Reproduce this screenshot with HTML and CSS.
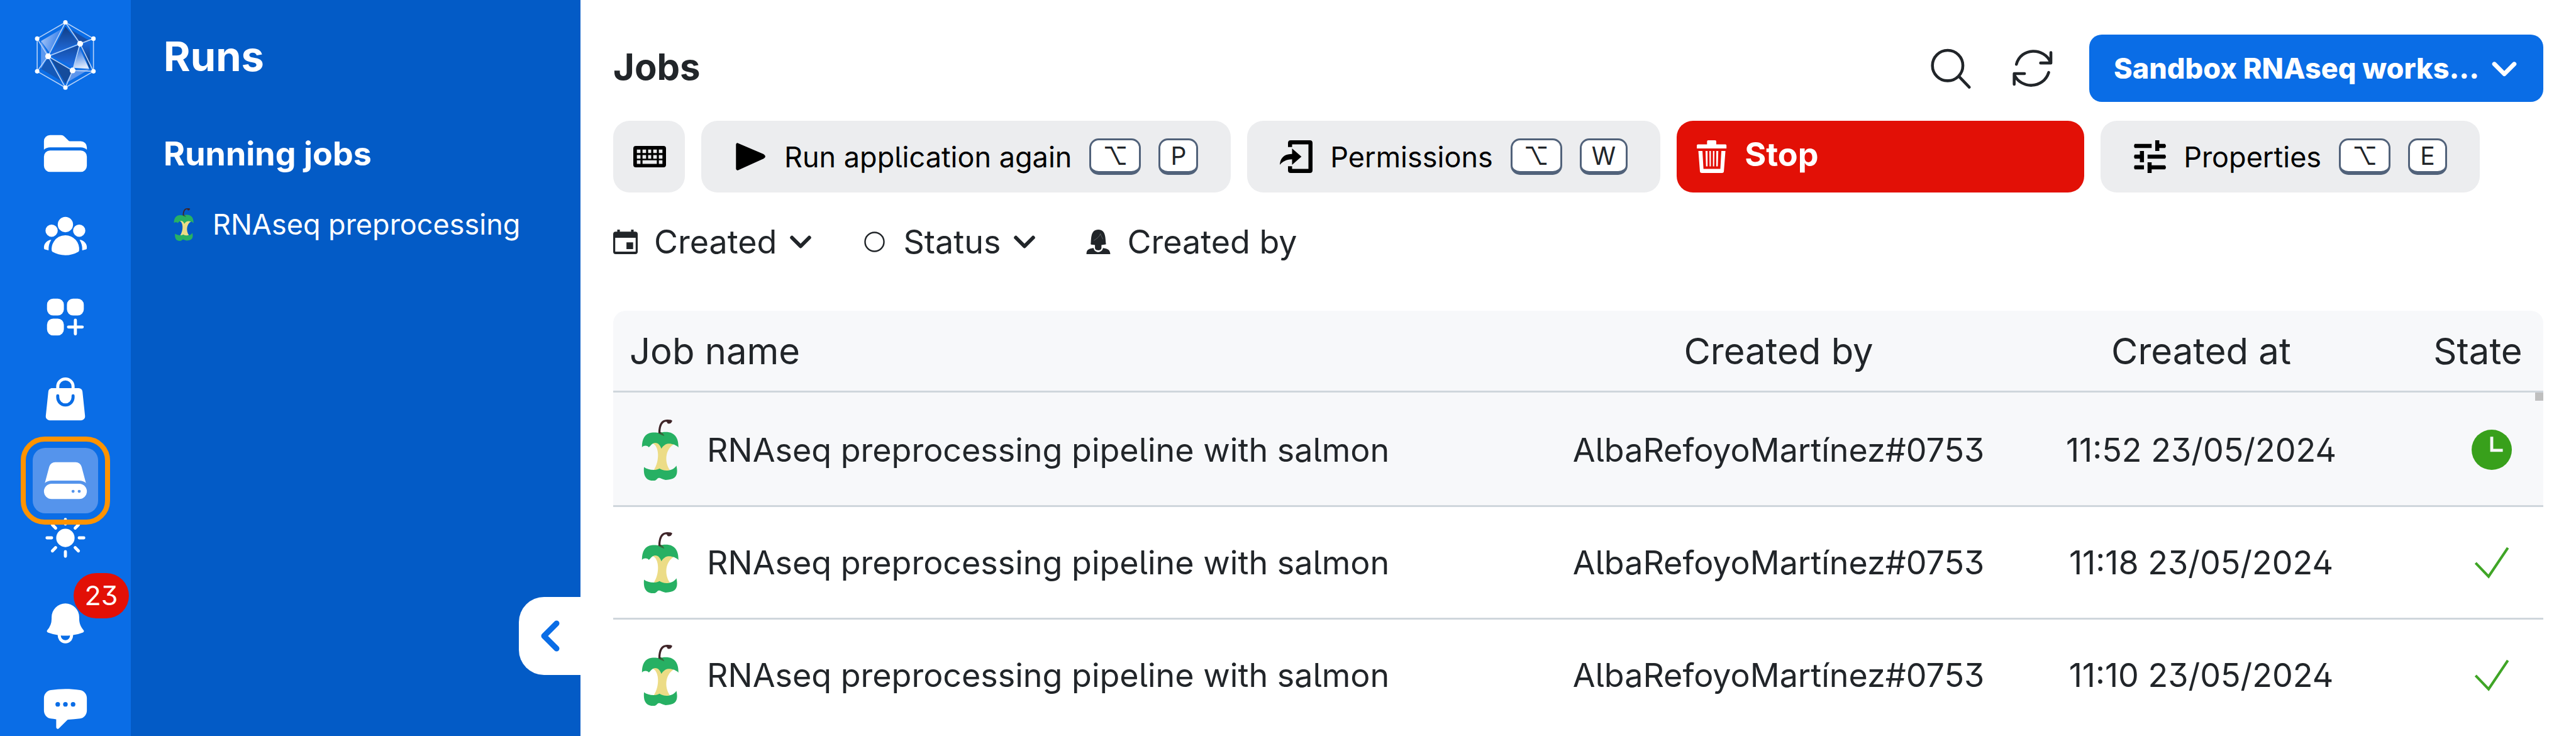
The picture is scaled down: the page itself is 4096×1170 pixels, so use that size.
FILE: index.html
```html
<!DOCTYPE html>
<html lang="en">
<head>
<meta charset="utf-8">
<title>Jobs</title>
<link rel="stylesheet" href="styles.css">
</head>
<body>
<svg class="sprite" aria-hidden="true">
  <symbol id="apple" viewBox="-24 60 358 358">
    <path d="M112 200C150 215 155 300 118 357C145 365 185 368 212 355C180 310 185 235 235 206C210 190 130 185 112 200Z" fill="#ecdc86"/>
    <path d="M49 222C48 175 68 140 105 137C125 134 140 138 152 139C170 131 205 130 225 140C255 155 263 185 263 223C245 203 205 195 187 206C174 214 168 222 163 231C155 212 146 197 127 197C106 199 102 214 89 222C78 210 62 210 49 222Z" fill="#27b063"/>
    <path d="M61 339C84 356 128 362 152 347C174 364 228 366 251 330C263 385 250 413 188 414C164 410 156 399 144 403C134 409 134 419 112 419C72 416 56 392 61 339Z" fill="#27b063"/>
    <path d="M158 133C170 137 177 146 180 157C168 151 155 149 147 141Z" fill="#356b3d"/>
    <path d="M145 140C146 90 160 60 195 60C215 60 228 63 226 69C222 82 206 90 196 78C200 74 190 72 185 73C165 79 156 110 158 141Z" fill="#3f2529"/>
  </symbol>
  <symbol id="chevron" viewBox="0 0 16 16"><path d="M2.500 5.500L8 11L13.500 5.500" fill="none" stroke="currentColor" stroke-width="2.400" stroke-linecap="round" stroke-linejoin="round"/></symbol>
  <symbol id="check" viewBox="-2 -2 70 64"><path d="M2 31L27 57L64 2" fill="none" stroke="#3fa526" stroke-width="5"/></symbol>
</svg>

<nav class="rail" aria-label="Main">
  <a class="logo" href="#" aria-label="Home">
    <svg viewBox="144 60 360 408">
      <defs>
        <linearGradient id="g1" x1="0" y1="0" x2="1" y2=".3"><stop offset=".1" stop-color="#a6c5f5"/><stop offset="1" stop-color="#2f7bea"/></linearGradient>
        <linearGradient id="g2" x1="0" y1="0" x2="0" y2="1"><stop offset="0" stop-color="#113d85"/><stop offset="1" stop-color="#2170e4"/></linearGradient>
        <linearGradient id="g3" x1="0" y1="0" x2="0" y2="1"><stop offset="0" stop-color="#1b6ae0"/><stop offset="1" stop-color="#0c356f"/></linearGradient>
        <linearGradient id="g4" x1="0" y1="0" x2=".2" y2="1"><stop offset=".1" stop-color="#2a72e0"/><stop offset="1" stop-color="#dce8fb"/></linearGradient>
        <linearGradient id="g5" x1="0" y1="0" x2="0" y2="1"><stop offset="0" stop-color="#154a9e"/><stop offset="1" stop-color="#1e70ea"/></linearGradient>
      </defs>
      <path d="M305 110L181 182L232 250Z" fill="url(#g1)"/>
      <path d="M181 182L225 262L181 345Z" fill="#5b99f0"/>
      <path d="M324 98L240 262L402 192Z" fill="url(#g2)"/>
      <path d="M345 110L467 182L405 195Z" fill="#184fa8"/>
      <path d="M467 182V347L410 205Z" fill="url(#g3)"/>
      <path d="M408 225L463 345L370 338Z" fill="url(#g4)"/>
      <path d="M245 268L404 205L366 335Z" fill="url(#g5)"/>
      <path d="M223 280L181 345L320 428Z" fill="#1559b8"/>
      <path d="M232 274L366 357L324 430Z" fill="#154c9c"/>
      <path d="M366 355L465 347L330 426Z" fill="#5c95ec"/>
      <g fill="none" stroke="#b6d1f7" stroke-width="6">
        <path d="M324 73L488 168V359L324 454L159 359V168Z"/>
        <path d="M324 73L410 198L488 168M410 198L488 359L366 354L410 198L223 271L366 354L324 454L223 271L324 73M159 168L223 271L159 359"/>
      </g>
      <g fill="#fff"><circle cx="324" cy="73" r="13"/><circle cx="488" cy="168" r="13"/><circle cx="488" cy="359" r="13"/><circle cx="324" cy="454" r="13"/><circle cx="159" cy="359" r="13"/><circle cx="159" cy="168" r="13"/><circle cx="410" cy="198" r="17"/><circle cx="223" cy="271" r="17"/><circle cx="366" cy="354" r="17"/></g>
    </svg>
  </a>
  <div class="rail-main">
    <a class="rail-link" href="#" aria-label="Files"><svg viewBox="0 0 24 24"><path d="M19.500 21a3 3 0 0 0 3-3v-4.500a3 3 0 0 0-3-3h-15a3 3 0 0 0-3 3V18a3 3 0 0 0 3 3h15ZM1.500 10.146V6a3 3 0 0 1 3-3h5.379a2.250 2.250 0 0 1 1.590.659l2.122 2.121c.14.141.331.22.53.22H19.500a3 3 0 0 1 3 3v1.146A4.483 4.483 0 0 0 19.500 9h-15a4.483 4.483 0 0 0-3 1.146Z"/></svg></a>
    <a class="rail-link" href="#" aria-label="Projects"><svg viewBox="0 0 24 24"><path d="M8.250 6.750a3.750 3.750 0 1 1 7.500 0 3.750 3.750 0 0 1-7.500 0ZM15.750 9.750a3 3 0 1 1 6 0 3 3 0 0 1-6 0ZM2.250 9.750a3 3 0 1 1 6 0 3 3 0 0 1-6 0ZM6.310 15.117A6.745 6.745 0 0 1 12 12a6.745 6.745 0 0 1 6.709 7.498.75.75 0 0 1-.372.568A12.696 12.696 0 0 1 12 21.750c-2.305 0-4.470-.612-6.337-1.684a.75.75 0 0 1-.372-.568 6.787 6.787 0 0 1 1.019-4.380ZM5.082 14.254a8.287 8.287 0 0 0-1.308 5.135 9.687 9.687 0 0 1-1.764-.44l-.115-.04a.563.563 0 0 1-.373-.487l-.01-.121a3.750 3.750 0 0 1 3.570-4.047ZM20.226 19.389a8.287 8.287 0 0 0-1.308-5.135 3.750 3.750 0 0 1 3.570 4.047l-.01.121a.563.563 0 0 1-.373.486l-.115.04c-.567.2-1.156.349-1.764.441Z"/></svg></a>
    <a class="rail-link" href="#" aria-label="Resources"><svg viewBox="0 0 24 24"><path d="M6 3a3 3 0 0 0-3 3v2.250a3 3 0 0 0 3 3h2.250a3 3 0 0 0 3-3V6a3 3 0 0 0-3-3H6ZM15.750 3a3 3 0 0 0-3 3v2.250a3 3 0 0 0 3 3H18a3 3 0 0 0 3-3V6a3 3 0 0 0-3-3h-2.250ZM6 12.750a3 3 0 0 0-3 3V18a3 3 0 0 0 3 3h2.250a3 3 0 0 0 3-3v-2.250a3 3 0 0 0-3-3H6ZM17.625 13.500a.75.75 0 0 0-1.500 0v2.625H13.500a.75.75 0 0 0 0 1.500h2.625v2.625a.75.75 0 0 0 1.500 0v-2.625h2.625a.75.75 0 0 0 0-1.500h-2.625V13.500Z"/></svg></a>
    <a class="rail-link" href="#" aria-label="Applications"><svg viewBox="0 0 24 24"><path fill-rule="evenodd" d="M7.500 6v.75H5.513c-.96 0-1.764.724-1.865 1.679l-1.263 12A1.875 1.875 0 0 0 4.250 22.500h15.500a1.875 1.875 0 0 0 1.865-2.071l-1.263-12a1.875 1.875 0 0 0-1.865-1.679H16.500V6a4.500 4.500 0 1 0-9 0ZM12 3a3 3 0 0 0-3 3v.75h6V6a3 3 0 0 0-3-3Zm-3 8.250a3 3 0 1 0 6 0v-.75a.75.75 0 0 1 1.500 0v.75a4.500 4.500 0 1 1-9 0v-.75a.75.75 0 0 1 1.500 0v.75Z"/></svg></a>
    <a class="rail-link active" href="#" aria-label="Runs" aria-current="page"><svg viewBox="0 0 24 24"><path d="M4.080 5.227A3 3 0 0 1 6.979 3H17.020a3 3 0 0 1 2.900 2.227l2.113 7.926A5.228 5.228 0 0 0 18.750 12H5.250a5.228 5.228 0 0 0-3.284 1.153L4.080 5.227Z"/><path fill-rule="evenodd" d="M5.250 13.500a3.750 3.750 0 1 0 0 7.500h13.500a3.750 3.750 0 1 0 0-7.500H5.250Zm10.500 4.500a.75.75 0 1 0 0-1.500.75.75 0 0 0 0 1.500Zm3.750-.75a.75.75 0 1 1-1.500 0 .75.75 0 0 1 1.500 0Z"/></svg></a>
  </div>
  <div class="rail-bottom">
    <button class="rail-tool" aria-label="Toggle theme"><svg viewBox="0 0 24 24"><circle cx="12" cy="12" r="4.500"/><path d="M12 3v2.250M12 18.750V21M3 12h2.250M18.750 12H21M5.640 5.640l1.580 1.580M16.780 16.780l1.580 1.580M5.640 18.360l1.580-1.580M16.780 7.220l1.580-1.580" fill="none" stroke="currentColor" stroke-width="1.500" stroke-linecap="round"/></svg></button>
    <button class="rail-tool" aria-label="Notifications"><svg viewBox="0 0 24 24"><path fill-rule="evenodd" d="M5.250 9a6.750 6.750 0 0 1 13.500 0v.75c0 2.123.8 4.057 2.118 5.520a.75.75 0 0 1-.297 1.206c-1.544.57-3.160.99-4.831 1.243a3.750 3.750 0 1 1-7.480 0 24.585 24.585 0 0 1-4.831-1.244.75.75 0 0 1-.298-1.205A8.217 8.217 0 0 0 5.250 9.750V9Zm4.502 8.900a2.250 2.250 0 1 0 4.496 0 25.057 25.057 0 0 1-4.496 0Z"/></svg><span class="badge">23</span></button>
    <button class="rail-tool" aria-label="Support"><svg viewBox="0 0 24 24"><path d="M4.848 2.771A49.144 49.144 0 0 1 12 2.250c2.430 0 4.817.178 7.152.52 1.978.292 3.348 2.024 3.348 3.970v6.020c0 1.946-1.370 3.678-3.348 3.970-1.940.284-3.916.455-5.922.505a.39.39 0 0 0-.266.112L8.780 21.530A.75.75 0 0 1 7.500 21v-3.955a48.842 48.842 0 0 1-2.652-.316c-1.978-.29-3.348-2.024-3.348-3.970V6.741c0-1.946 1.370-3.680 3.348-3.970Z"/><g class="dots"><circle cx="8.250" cy="9.750" r="1.125"/><circle cx="12" cy="9.750" r="1.125"/><circle cx="15.750" cy="9.750" r="1.125"/></g></svg></button>
  </div>
</nav>

<aside class="side">
  <h2 class="side-title">Runs</h2>
  <h3 class="side-heading">Running jobs</h3>
  <a class="side-item" href="#"><svg class="apple-sm"><use href="#apple"/></svg><span class="side-label">RNAseq preprocessing</span></a>
  <button class="collapse" aria-label="Collapse sidebar"><svg viewBox="0 0 31 50"><path d="M26 5L6 25L26 45" fill="none" stroke="currentColor" stroke-width="9" stroke-linecap="round" stroke-linejoin="round"/></svg></button>
</aside>

<main class="main">
  <header class="top">
    <h1 class="title">Jobs</h1>
    <div class="top-icons">
      <button class="icon-btn" aria-label="Search"><svg viewBox="80 48 238 238"><path d="M248 215L308 277" /><circle cx="180" cy="149" r="90"/></svg></button>
      <button class="icon-btn" aria-label="Refresh"><svg viewBox="560 50 238 238"><path d="M583 144C610 43 747 43 785 132M787 74V136H726M774 192C742 291 610 291 570 205M570 262V199H631"/></svg></button>
    </div>
    <button class="workspace" aria-haspopup="listbox"><span>Sandbox RNAseq works...</span><svg class="chev-lg"><use href="#chevron"/></svg></button>
  </header>

  <div class="toolbar" role="toolbar" aria-label="Job actions">
    <button class="tool tool-square" aria-label="Shortcuts"><svg class="tool-icon" viewBox="0 -11 64 64"><path fill-rule="evenodd" d="M5 0H59Q64 0 64 5V37Q64 42 59 42H5Q0 42 0 37V5Q0 0 5 0ZM7 7V14H14V7ZM18 7V14H25V7ZM29 7V14H35V7ZM39 7V14H46V7ZM50 7V14H57V7ZM7 18V25H14V18ZM18 18V25H25V18ZM29 18V25H35V18ZM39 18V25H46V18ZM50 18V25H57V18ZM7 28V35H14V28ZM18 28V35H46V28ZM50 28V35H57V28Z"/></svg></button>
    <button class="tool"><svg class="tool-icon" viewBox="-4 -5 64 64"><path d="M0 3Q1-1 5 1L54 22Q61 27 54 31L5 53Q1 55 0 51Z"/></svg>Run application again<kbd class="key-alt">⌥</kbd><kbd>P</kbd></button>
    <button class="tool"><svg class="tool-icon" viewBox="84 78 192 192"><path d="M148 78H260Q276 78 276 94V254Q276 270 260 270H148Q132 270 132 254V230H156V246H252V102H156V118H132V94Q132 78 148 78Z"/><path d="M156 126L211 174L156 222V190C122 190 100 203 84 222C86 180 112 158 156 158Z"/></svg>Permissions<kbd class="key-alt">⌥</kbd><kbd>W</kbd></button>
    <button class="tool tool-danger"><svg class="tool-icon" viewBox="-5 0 64 64"><path fill-rule="evenodd" d="M22 0H36Q38 0 38 2V8H56Q58 8 58 10V16H0V10Q0 8 2 8H20V2Q20 0 22 0ZM3 21H11L13 56H46L48 21H56L53 60Q53 64 49 64H10Q6 64 6 60Z"/><path d="M17 21H21V51H18ZM24.500 21H27.500V51H25ZM31.500 21H34.500L34 51H31.500ZM38 21H42L41 51H38Z"/></svg><span class="stop-label">Stop</span></button>
    <button class="tool"><svg class="tool-icon" viewBox="0 0 64 64"><path d="M3 7H36V15H3Q0 11 3 7ZM43 0H51V7H62Q66 11 62 15H51V21H43ZM3 28H13V21H21V43H13V36H3Q0 32 3 28ZM28 28H62Q66 32 62 36H28ZM3 49H21V57H3Q0 53 3 49ZM28 43H36V49H62Q66 53 62 57H36V64H28Z"/></svg>Properties<kbd class="key-alt">⌥</kbd><kbd>E</kbd></button>
  </div>

  <div class="filters">
    <button class="filter" aria-haspopup="menu"><svg class="filter-icon" viewBox="0 0 48 48"><path fill-rule="evenodd" d="M8 0H13V4H35V0H40V4H43Q48 4 48 9V43Q48 48 43 48H5Q0 48 0 43V9Q0 4 5 4H8ZM4 16V43H44V16ZM26 25H39V38H26Z"/></svg>Created<svg class="chev"><use href="#chevron"/></svg></button>
    <button class="filter" aria-haspopup="menu"><svg class="filter-icon" viewBox="0 0 48 48"><circle cx="24" cy="24" r="18.500" fill="none" stroke="currentColor" stroke-width="3"/></svg>Status<svg class="chev"><use href="#chevron"/></svg></button>
    <button class="filter"><svg class="filter-icon" viewBox="70 66 144 144"><path d="M97 152C101 125 93 66 142 66C188 66 182 120 187 152C178 156 168 155 160 156V174C160 192 122 192 122 174V156C112 156 104 156 97 152Z"/><path d="M72 210C72 184 84 178 114 174C119 206 163 206 169 174C198 178 210 184 212 210Z"/><path d="M115 130C135 118 148 108 154 90C158 105 165 112 168 122" fill="none" stroke="#8a8d90" stroke-width="2"/></svg>Created by</button>
  </div>

  <div class="table-wrap">
    <table class="jobs">
      <colgroup><col><col class="col-mid"><col class="col-mid"><col class="col-state"></colgroup>
      <thead><tr><th class="name" scope="col">Job name</th><th scope="col">Created by</th><th scope="col">Created at</th><th scope="col">State</th></tr></thead>
      <tbody>
        <tr class="selected"><td><div class="job"><svg class="apple"><use href="#apple"/></svg>RNAseq preprocessing pipeline with salmon</div></td><td>AlbaRefoyoMartínez#0753</td><td>11:52 23/05/2024</td><td class="state"><svg class="clock" viewBox="0 0 80 80" role="img" aria-label="Running"><circle cx="40" cy="40" r="40" fill="#38a01b"/><path d="M40 14V41H62" fill="none" stroke="#f7f8fa" stroke-width="6"/></svg></td></tr>
        <tr><td><div class="job"><svg class="apple"><use href="#apple"/></svg>RNAseq preprocessing pipeline with salmon</div></td><td>AlbaRefoyoMartínez#0753</td><td>11:18 23/05/2024</td><td class="state"><svg class="check" role="img" aria-label="Success"><use href="#check"/></svg></td></tr>
        <tr><td><div class="job"><svg class="apple"><use href="#apple"/></svg>RNAseq preprocessing pipeline with salmon</div></td><td>AlbaRefoyoMartínez#0753</td><td>11:10 23/05/2024</td><td class="state"><svg class="check" role="img" aria-label="Success"><use href="#check"/></svg></td></tr>
      </tbody>
    </table>
    <span class="scroll-thumb"></span>
  </div>
</main>
</body>
</html>
```

FILE: styles.css
```css
:root {
  --primary: #0a6de6;
  --side: #035bc6;
  --text: #212529;
  --line: #cfd6dc;
}

* { box-sizing: border-box; }

body {
  margin: 0;
  display: flex;
  height: 100vh;
  overflow: hidden;
  background: #fff;
  color: var(--text);
  font-family: Inter, "Liberation Sans", sans-serif;
  font-feature-settings: "ss01", "cv05";
  font-size: 52px;
}

button {
  font: inherit;
  font-feature-settings: inherit;
  color: inherit;
  background: none;
  border: 0;
  padding: 0;
  cursor: pointer;
}

a { color: inherit; text-decoration: none; }
h1, h2, h3 { margin: 0; }
svg { display: block; flex: none; fill: currentColor; }
.sprite { position: absolute; width: 0; height: 0; }

/* Icon rail */
.rail {
  flex: none;
  width: 208px;
  display: flex;
  flex-direction: column;
  align-items: center;
  padding: 32px 0 4px;
  background: var(--primary);
  color: #fff;
}
.logo svg { width: 98px; height: 111px; }
.rail-main {
  display: flex;
  flex-direction: column;
  gap: 26px;
  margin-top: 49px;
}
.rail-link {
  position: relative;
  display: grid;
  place-items: center;
  width: 104px;
  height: 104px;
  border-radius: 20px;
}
.rail svg { overflow: visible; }
.rail-link svg, .rail-tool svg { width: 78px; height: 78px; }
.active { background: #5594ec; }
.active::after {
  content: "";
  position: absolute;
  inset: -18px -19px;
  border: 8px solid #ff9300;
  border-radius: 38px;
  z-index: 1;
}
.rail-bottom {
  display: flex;
  flex-direction: column;
  gap: 58px;
  margin-top: auto;
}
.rail-tool {
  position: relative;
  height: 78px;
}
.dots { fill: var(--primary); }
.badge {
  position: absolute;
  left: 52px;
  bottom: 47px;
  width: 88px;
  height: 72px;
  border-radius: 36px;
  background: #e21006;
  font-size: 43px;
  line-height: 70px;
  text-align: center;
}

/* Secondary sidebar */
.side {
  position: relative;
  flex: none;
  width: 715px;
  padding: 50px 52px 0;
  background: var(--side);
  color: #fff;
}
.side-title { font-size: 65px; line-height: 80px; }
.side-heading { margin-top: 83px; font-size: 52px; line-height: 64px; }
.side-item {
  display: flex;
  align-items: center;
  gap: 20px;
  margin-top: 48px;
  padding-left: 6px;
  font-size: 45px;
  line-height: 64px;
}
.apple-sm { width: 52px; height: 52px; }
.side-label { overflow: hidden; white-space: nowrap; }
.collapse {
  position: absolute;
  right: 0;
  bottom: 97px;
  display: grid;
  place-items: center;
  width: 98px;
  height: 124px;
  border-radius: 40px 0 0 40px;
  background: #fff;
  color: var(--primary);
}
.collapse svg { width: 31px; height: 50px; }

/* Main area */
.main { flex: 1; min-width: 0; padding: 55px 52px 0; }
.top { display: flex; align-items: center; gap: 58px; }
.title { flex: 1; padding-bottom: 6px; font-size: 58px; line-height: 72px; }
.top-icons { display: flex; gap: 66px; }
.icon-btn svg {
  width: 64px;
  height: 64px;
  overflow: visible;
  fill: none;
  stroke: currentColor;
  stroke-width: 17;
  stroke-linecap: round;
  stroke-linejoin: round;
}
.workspace {
  display: flex;
  align-items: center;
  justify-content: space-between;
  width: 722px;
  height: 107px;
  padding: 0 39px;
  border-radius: 20px;
  background: var(--primary);
  color: #fff;
  font-size: 45px;
  font-weight: 800;
  white-space: nowrap;
}
.chev-lg { width: 46px; height: 46px; }

.toolbar { display: flex; gap: 26px; margin-top: 30px; }
.tool {
  display: flex;
  align-items: center;
  gap: 28px;
  height: 114px;
  padding: 0 52px;
  border-radius: 26px;
  background: #ecedef;
  color: #000;
  font-size: 45px;
  white-space: nowrap;
}
.tool-square { padding: 0 30px 0 32px; }
.tool-icon { width: 52px; height: 52px; }
.tool-danger {
  width: 648px;
  padding: 0 28px;
  background: #e21006;
  color: #fff;
  font-size: 52px;
  font-weight: 700;
}
.stop-label { padding-bottom: 8px; }
kbd {
  height: 58px;
  padding: 0 16px;
  border: 3px solid #51627a;
  border-bottom-width: 6px;
  border-radius: 15px;
  background: #fff;
  color: var(--text);
  font-family: inherit;
  font-size: 39px;
  line-height: 49px;
  text-align: center;
}
.key-alt { min-width: 82px; }

.filters { display: flex; gap: 78px; margin-top: 46px; }
.filter {
  display: flex;
  align-items: center;
  gap: 26px;
  height: 64px;
  font-size: 52px;
}
.filter-icon { width: 39px; height: 39px; }
.chev { width: 40px; height: 40px; margin-left: -8px; }

/* Jobs table */
.table-wrap { position: relative; margin-top: 78px; }
.jobs {
  width: 100%;
  table-layout: fixed;
  border-collapse: separate;
  border-spacing: 0;
}
.col-mid { width: 672px; }
.col-state { width: 208px; }
.jobs th {
  height: 130px;
  padding: 0;
  border-bottom: 3px solid var(--line);
  background: #f7f8fa;
  font-size: 58px;
  font-weight: 400;
}
.jobs th:first-child { border-top-left-radius: 20px; }
.jobs th:last-child { border-top-right-radius: 20px; }
.jobs .name { padding-left: 26px; text-align: left; }
.jobs td {
  height: 179px;
  padding: 0;
  border-bottom: 3px solid var(--line);
  text-align: center;
  white-space: nowrap;
}
.jobs tr:last-child td { border-bottom-color: transparent; }
.jobs .selected td { height: 182px; padding-top: 3px; background: #f7f8fa; }
.job {
  display: flex;
  align-items: center;
  gap: 26px;
  padding-left: 26px;
}
.apple { width: 97px; height: 97px; }
.jobs .state { padding-left: 44px; }
.state svg { margin: 0 auto; }
.clock { width: 64px; height: 64px; }
.check { width: 58px; height: 54px; }
.scroll-thumb {
  position: absolute;
  top: 130px;
  right: 0;
  width: 13px;
  height: 13px;
  background: #bfbfbf;
}
```
